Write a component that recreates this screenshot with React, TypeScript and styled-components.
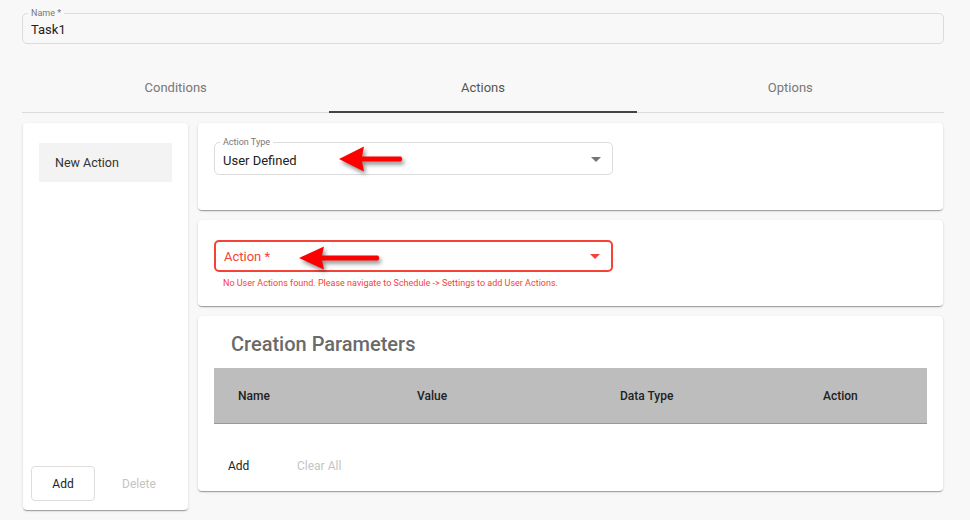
import React from "react";
import styled, { createGlobalStyle } from "styled-components";

const Global = createGlobalStyle`
  html, body { margin: 0; padding: 0; background: #f8f8f8; }
  body { font-family: Roboto, "Liberation Sans", Arial, sans-serif; color: #222; }
  * { box-sizing: border-box; }
`;

const Page = styled.div`
  width: 970px;
  height: 520px;
  padding: 13px 26px 0 22px;
  overflow: hidden;
`;

const OutlinedField = styled.div<{ $error?: boolean; $width?: number; $height?: number }>`
  position: relative;
  width: ${(p) => (p.$width ? `${p.$width}px` : "100%")};
  height: ${(p) => p.$height ?? 32}px;
  border: ${(p) => (p.$error ? "2px solid #f44336" : "1px solid #dcdcdc")};
  border-radius: 5px;
  display: flex;
  align-items: center;
  padding: 0 0 0 8px;
`;

const FloatLabel = styled.span<{ $bg: string }>`
  position: absolute;
  top: -6px;
  left: 5px;
  padding: 0 3px;
  font-size: 9px;
  line-height: 11px;
  color: #777;
  background: ${(p) => p.$bg};
`;

const FieldValue = styled.span<{ $offset?: number }>`
  font-size: 13px;
  color: #222;
  margin-top: ${(p) => p.$offset ?? 4}px;
`;

const Placeholder = styled.span`
  font-size: 13px;
  color: #f44336;
`;

const Caret = styled.span<{ $color: string }>`
  position: absolute;
  right: 11px;
  top: 50%;
  margin-top: -2px;
  width: 0;
  height: 0;
  border-left: 5px solid transparent;
  border-right: 5px solid transparent;
  border-top: 5px solid ${(p) => p.$color};
`;

const Tabs = styled.div`
  margin-top: 21px;
  width: 922px;
  display: grid;
  grid-template-columns: repeat(3, 1fr);
  border-bottom: 1px solid #dcdcdc;
`;

const Tab = styled.div<{ $active?: boolean }>`
  height: 48px;
  display: flex;
  align-items: center;
  justify-content: center;
  padding-bottom: 2px;
  font-size: 13px;
  color: ${(p) => (p.$active ? "#555" : "#777")};
  border-bottom: 2px solid ${(p) => (p.$active ? "#444" : "transparent")};
  margin-bottom: -1px;
`;

const Content = styled.div`
  margin-top: 10px;
  display: flex;
  align-items: flex-start;
  gap: 10px;
  padding-left: 1px;
`;

const Card = styled.div`
  background: #fff;
  border-radius: 4px;
  box-shadow: 0 2px 1px -1px rgba(0, 0, 0, 0.2), 0 1px 1px 0 rgba(0, 0, 0, 0.14),
    0 1px 3px 0 rgba(0, 0, 0, 0.12);
`;

const SideCard = styled(Card)`
  width: 165px;
  height: 387px;
  display: flex;
  flex-direction: column;
  padding: 20px 5px 9px 8px;
`;

const ListItem = styled.div`
  margin-left: 8px;
  margin-right: 11px;
  height: 39px;
  background: #f3f3f3;
  display: flex;
  align-items: center;
  padding-left: 16px;
  font-size: 12.5px;
  color: #333;
`;

const SideFooter = styled.div`
  margin-top: auto;
  display: flex;
  align-items: center;
`;

const OutlineButton = styled.button`
  flex-shrink: 0;
  width: 64px;
  height: 35px;
  background: #fff;
  border: 1px solid #ddd;
  border-radius: 4px;
  font-family: inherit;
  font-size: 12px;
  color: #222;
`;

const TextButton = styled.button<{ $disabled?: boolean; $width: number; $align?: string }>`
  flex-shrink: 0;
  width: ${(p) => p.$width}px;
  text-align: ${(p) => p.$align ?? "center"};
  background: none;
  border: none;
  padding: 0;
  font-family: inherit;
  font-size: 12px;
  color: ${(p) => (p.$disabled ? "#c4c4c4" : "#222")};
`;

const RightCol = styled.div`
  width: 745px;
  display: flex;
  flex-direction: column;
  gap: 10px;
`;

const FormCard = styled(Card)<{ $h: number; $top: number }>`
  height: ${(p) => p.$h}px;
  padding: ${(p) => p.$top}px 16px 0 16px;
`;

const Helper = styled.div`
  margin-top: 6px;
  margin-left: 9px;
  font-size: 9px;
  color: #f44336;
`;

const ArrowSvg = styled.svg`
  position: absolute;
  top: 0;
  overflow: visible;
  filter: drop-shadow(2px 3px 2px rgba(0, 0, 0, 0.45));
`;

const ParamsCard = styled(Card)`
  height: 175px;
  padding: 16px 16px 0 16px;
  display: flex;
  flex-direction: column;
`;

const Title = styled.h2`
  margin: 0 0 0 17px;
  height: 36px;
  line-height: 24px;
  font-size: 20px;
  font-weight: 500;
  color: #6a6a6a;
`;

const TableHead = styled.div`
  height: 56px;
  background: #bdbdbd;
  border-bottom: 1px solid #999;
  display: grid;
  grid-template-columns: 179px 203px 203px 1fr;
  align-items: center;
  padding-left: 24px;
`;

const HeadCell = styled.div`
  font-size: 12px;
  font-weight: 500;
  color: #222;
`;

const ParamsFooter = styled.div`
  margin-top: 35px;
  display: flex;
  align-items: center;
  padding-left: 14px;
`;

function Arrow({ left, shaft, head }: { left: number; shaft: number; head: number }) {
  const h = head / 2;
  return (
    <ArrowSvg width={shaft + 10} height={32} style={{ left }}>
      <path
        d={`M4 16 L29 ${16 - h} L27 13.5 L${shaft} 13.5 Q${shaft + 2.5} 16 ${shaft} 18.5 L27 18.5 L29 ${16 + h} Z`}
        fill="#ff0000"
      />
    </ArrowSvg>
  );
}

export default function App() {
  return (
    <>
      <Global />
      <Page>
        <OutlinedField $height={31}>
          <FloatLabel $bg="#f8f8f8">Name *</FloatLabel>
          <FieldValue $offset={2}>Task1</FieldValue>
        </OutlinedField>

        <Tabs>
          <Tab>Conditions</Tab>
          <Tab $active>Actions</Tab>
          <Tab>Options</Tab>
        </Tabs>

        <Content>
          <SideCard>
            <ListItem>New Action</ListItem>
            <SideFooter>
              <OutlineButton>Add</OutlineButton>
              <TextButton $disabled $width={88}>Delete</TextButton>
            </SideFooter>
          </SideCard>

          <RightCol>
            <FormCard $h={87} $top={19}>
              <OutlinedField $width={399} $height={33}>
                <FloatLabel $bg="#fff">Action Type</FloatLabel>
                <FieldValue $offset={3}>User Defined</FieldValue>
                <Caret $color="#757575" />
                <Arrow left={120} shaft={66} head={25} />
              </OutlinedField>
            </FormCard>

            <FormCard $h={86} $top={20}>
              <OutlinedField $error $width={399} $height={32}>
                <Placeholder>Action *</Placeholder>
                <Caret $color="#f44336" />
                <Arrow left={79} shaft={83} head={23} />
              </OutlinedField>
              <Helper>
                No User Actions found. Please navigate to Schedule -&gt; Settings to add User Actions.
              </Helper>
            </FormCard>

            <ParamsCard>
              <Title>Creation Parameters</Title>
              <TableHead>
                <HeadCell>Name</HeadCell>
                <HeadCell>Value</HeadCell>
                <HeadCell>Data Type</HeadCell>
                <HeadCell>Action</HeadCell>
              </TableHead>
              <ParamsFooter>
                <TextButton $width={69} $align="left">Add</TextButton>
                <TextButton $disabled $width={60} $align="left">Clear All</TextButton>
              </ParamsFooter>
            </ParamsCard>
          </RightCol>
        </Content>
      </Page>
    </>
  );
}
